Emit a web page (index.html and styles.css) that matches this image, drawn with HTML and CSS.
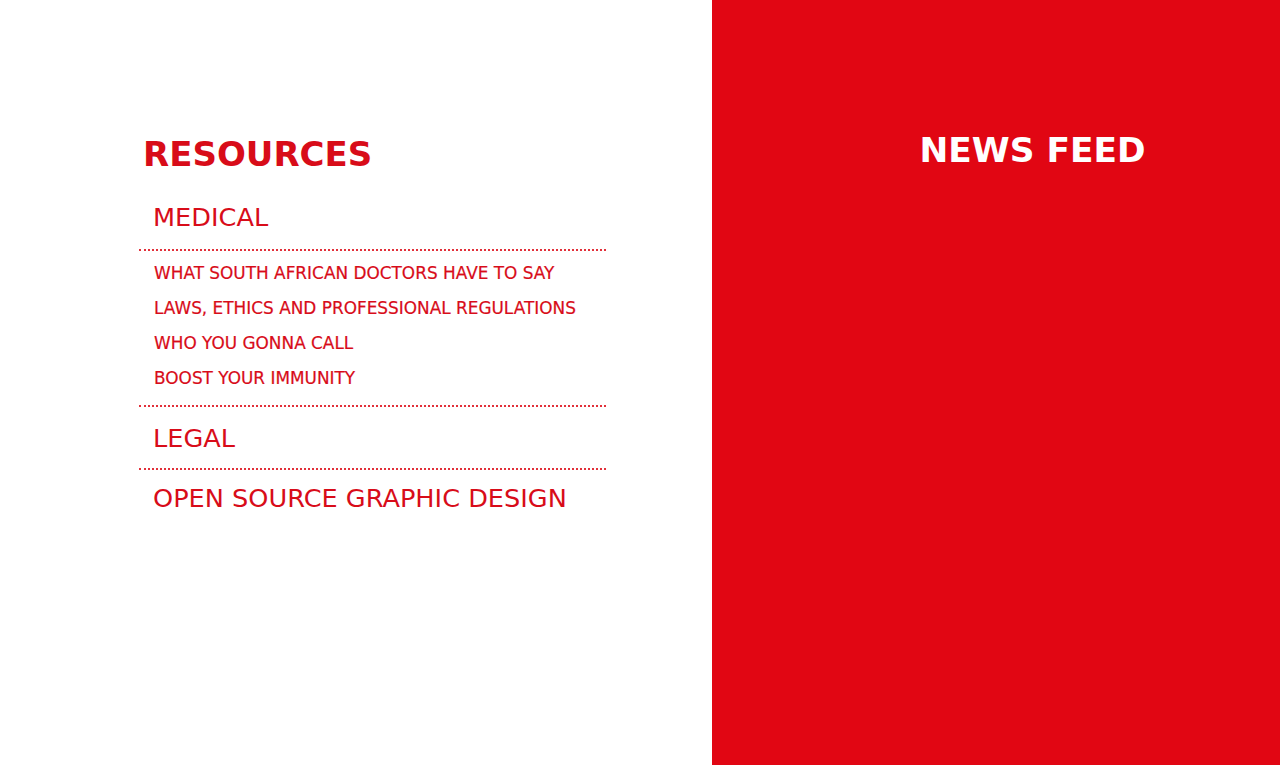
FILE: index.html
```html
<!DOCTYPE html>
<html lang="en">
<head>
    <meta charset="UTF-8">
    <meta name="viewport" content="width=device-width, initial-scale=1.0">
    <title>Resources</title>
    <link rel="stylesheet" href="styles.css">
</head>
<body>
    <div class="page">
        <div class="resources">
            <h2 class="res-title">RESOURCES</h2>

            <div class="group">
                <h3 class="group-title">MEDICAL</h3>
            </div>
            <ul class="links">
                <li><a href="#">WHAT SOUTH AFRICAN DOCTORS HAVE TO SAY</a></li>
                <li><a href="#">LAWS, ETHICS AND PROFESSIONAL REGULATIONS</a></li>
                <li><a href="#">WHO YOU GONNA CALL</a></li>
                <li><a href="#">BOOST YOUR IMMUNITY</a></li>
            </ul>

            <div class="group legal">
                <h3 class="group-title">LEGAL</h3>
            </div>
            <div class="group design">
                <h3 class="group-title">OPEN SOURCE GRAPHIC DESIGN</h3>
            </div>
        </div>

        <div class="news">
            <h2 class="news-title">NEWS FEED</h2>
        </div>
    </div>
</body>
</html>
```

FILE: styles.css
```css
*{
    margin: 0;
    padding: 0;
    box-sizing: border-box;
}
body{
    font-family: "DejaVu Sans", Verdana, sans-serif;
    background-color: white;
}

.page{
    display: flex;
    height: 765px;
}

.resources{
    width: 712px;
    padding: 134px 0 0 139px;
}
.res-title{
    width: 467px;
    padding-left: 4px;
    font-size: 34px;
    line-height: 40px;
    font-weight: bold;
    color: #d80c19;
}

.group{
    width: 467px;
    padding: 28px 0 17px 14px;
}
.group-title{
    font-size: 25.6px;
    line-height: 30px;
    font-weight: normal;
    color: #d80c19;
}

.links{
    list-style: none;
    width: 467px;
    padding: 5px 0 9px 15px;
    border-top: 2px dotted #e2303a;
    border-bottom: 2px dotted #e2303a;
}
.links li{
    font-size: 16.9px;
    line-height: 35px;
}
.links a{
    color: #d80c19;
    text-decoration: none;
    -webkit-text-stroke: 0.2px #d80c19;
}

.legal{
    padding-top: 16px;
    padding-bottom: 15px;
}
.design{
    padding-top: 13px;
    border-top: 2px dotted #e2303a;
}

.news{
    flex: 1;
    background-color: #e10613;
    padding: 130px 0 0 73px;
    text-align: center;
}
.news-title{
    font-size: 34.4px;
    line-height: 40px;
    font-weight: bold;
    color: white;
}
```
